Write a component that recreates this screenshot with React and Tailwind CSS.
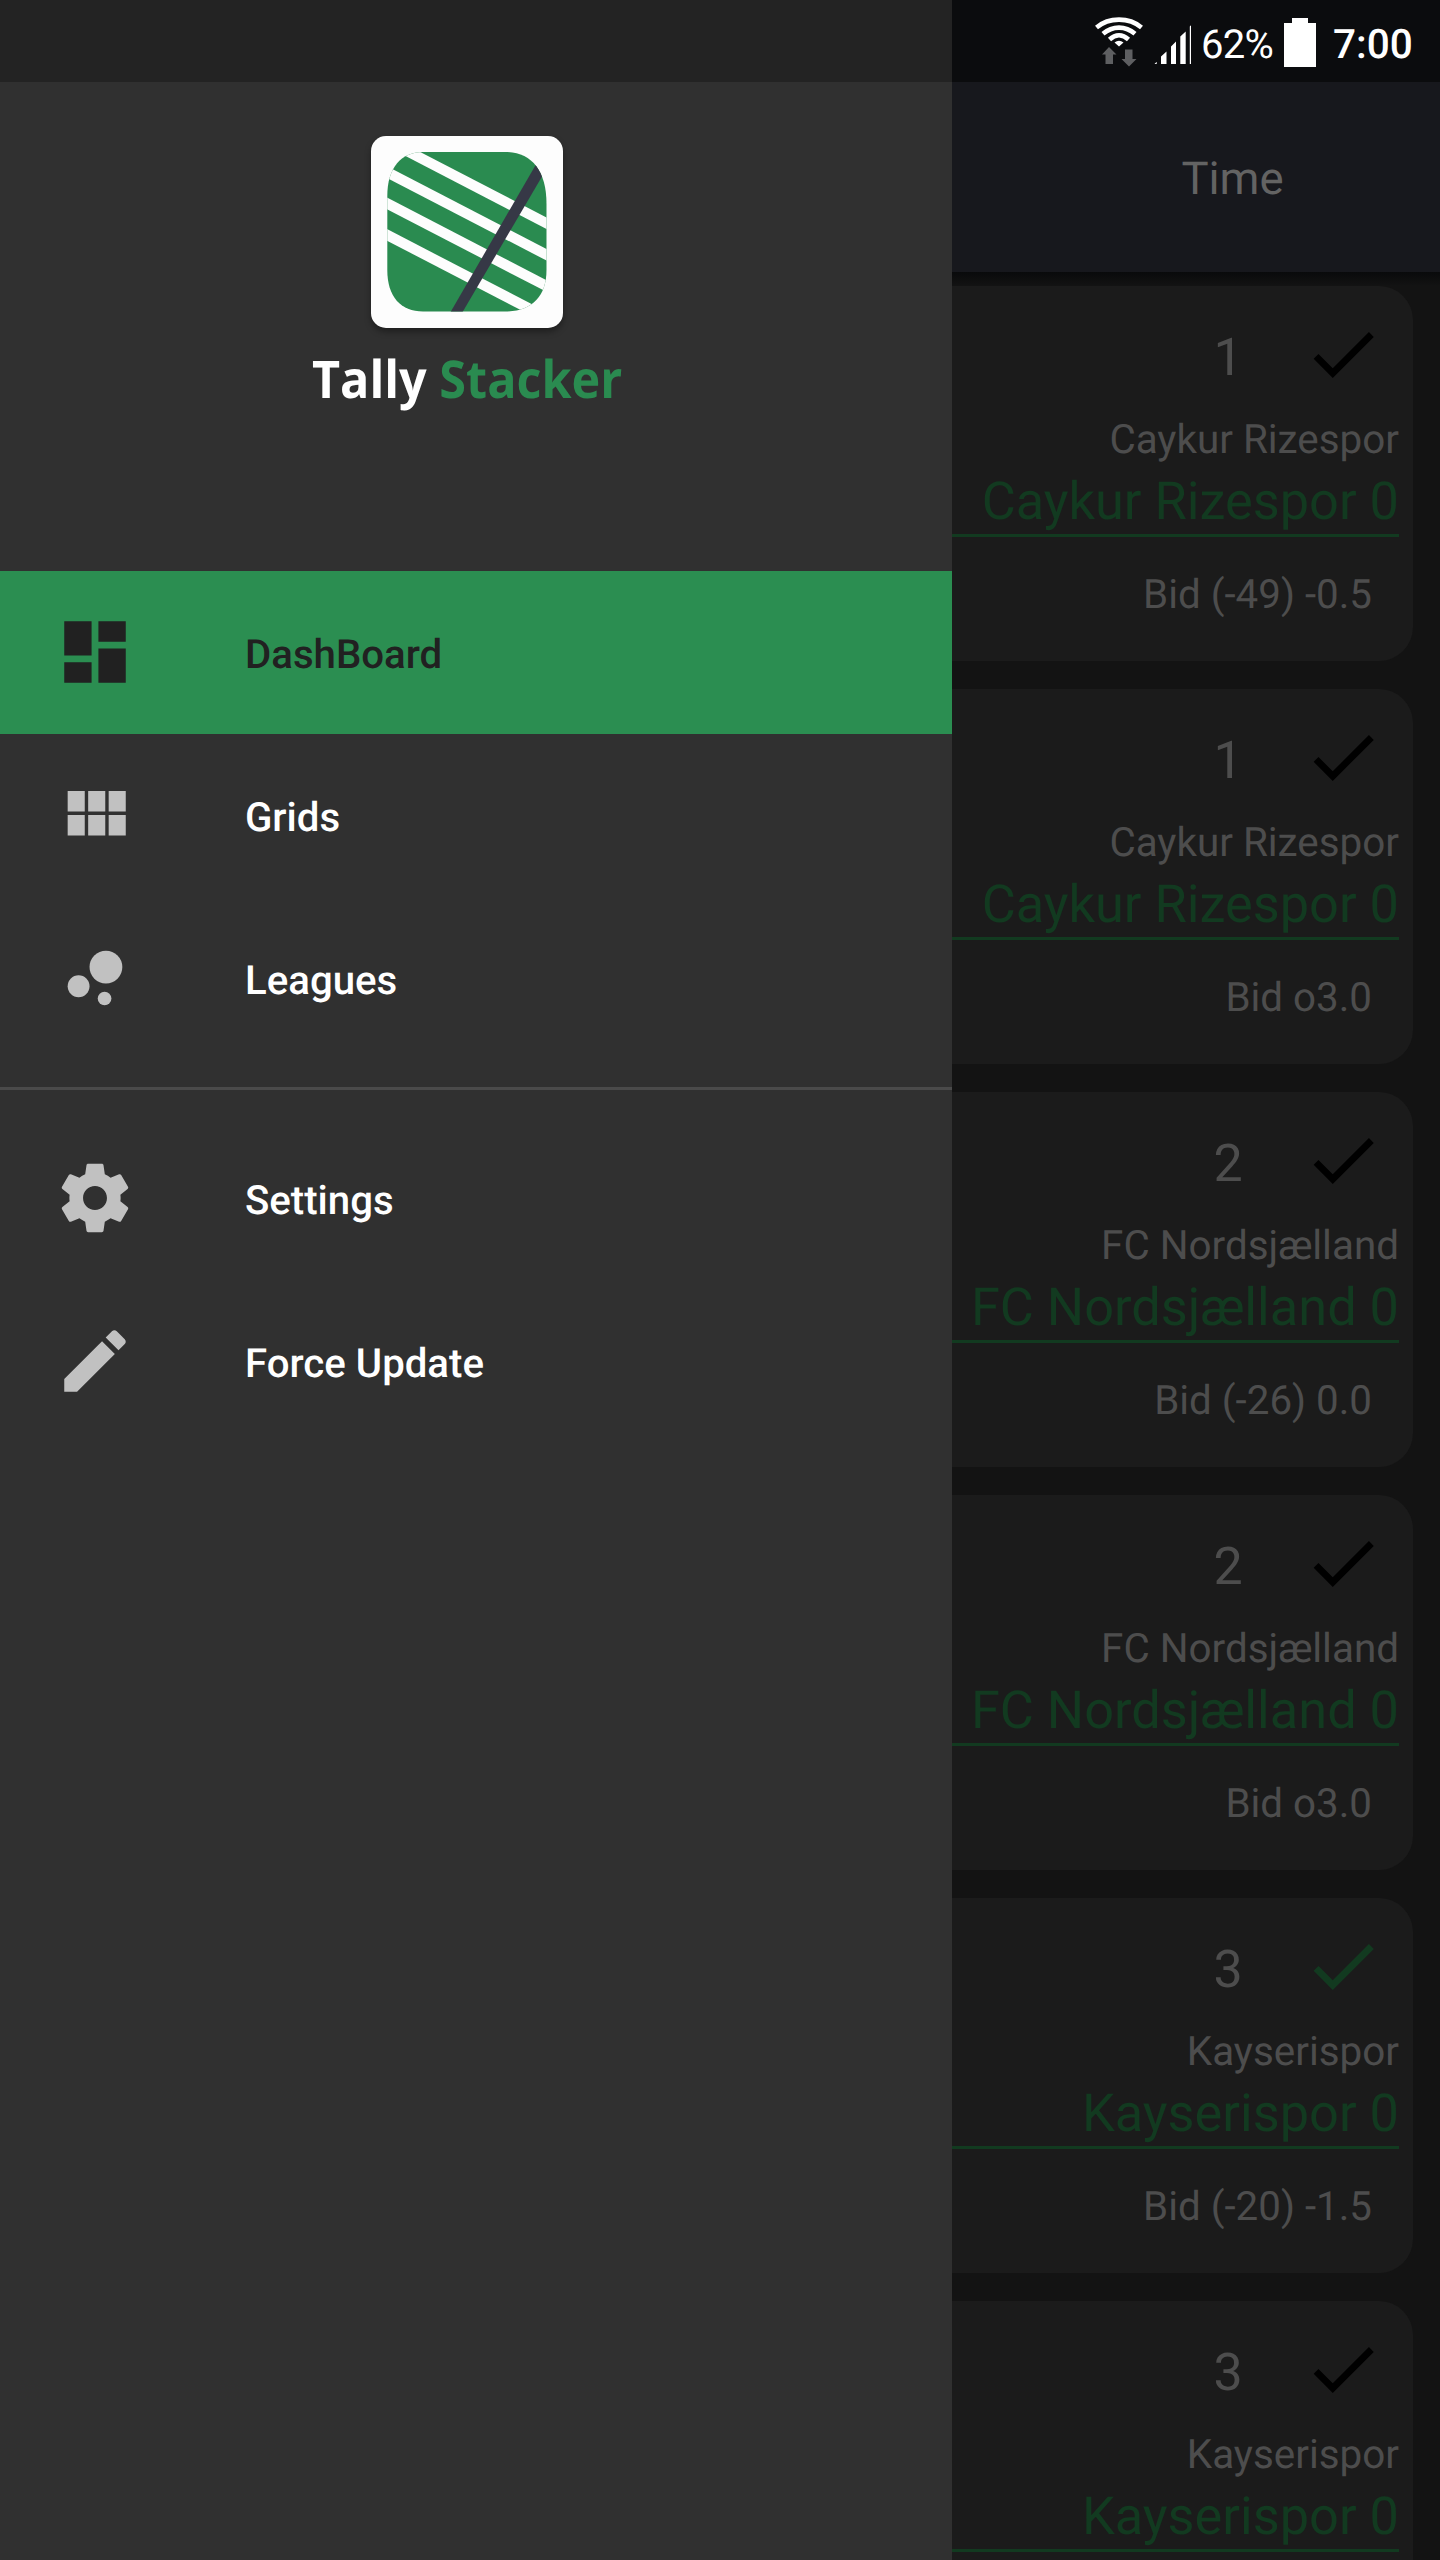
import React from "react";

const menuIcons = {
  dashboard: "M3 13h8V3H3v10zm0 8h8v-6H3v6zm10 0h8V11h-8v10zm0-18v6h8V3h-8z",
  grids: "M4 11h5V5H4v6zm0 7h5v-6H4v6zm6 0h5v-6h-5v6zm6 0h5v-6h-5v6zm-6-7h5V5h-5v6zm6-6v6h5V5h-5z",
  settings:
    "M19.43 12.98c.04-.32.07-.64.07-.98s-.03-.66-.07-.98l2.11-1.65c.19-.15.24-.42.12-.64l-2-3.46c-.12-.22-.39-.3-.61-.22l-2.49 1c-.52-.4-1.08-.73-1.69-.98l-.38-2.65C14.46 2.18 14.25 2 14 2h-4c-.25 0-.46.18-.49.42l-.38 2.65c-.61.25-1.17.59-1.69.98l-2.49-1c-.23-.09-.49 0-.61.22l-2 3.46c-.13.22-.07.49.12.64l2.11 1.65c-.04.32-.07.65-.07.98s.03.66.07.98l-2.11 1.65c-.19.15-.24.42-.12.64l2 3.46c.12.22.39.3.61.22l2.49-1c.52.4 1.08.73 1.69.98l.38 2.65c.03.24.24.42.49.42h4c.25 0 .46-.18.49-.42l.38-2.65c.61-.25 1.17-.59 1.69-.98l2.49 1c.23.09.49 0 .61-.22l2-3.46c.12-.22.07-.49-.12-.64l-2.11-1.65zM12 15.5c-1.93 0-3.5-1.57-3.5-3.5s1.57-3.5 3.5-3.5 3.5 1.57 3.5 3.5-1.57 3.5-3.5 3.5z",
  edit: "M3 17.25V21h3.75L17.81 9.94l-3.75-3.75L3 17.25zM20.71 7.04c.39-.39.39-1.02 0-1.41l-2.34-2.34c-.39-.39-1.02-.39-1.41 0l-1.83 1.83 3.75 3.75 1.83-1.83z",
};

function MenuItem({ icon, label, active }) {
  return (
    <a
      className={
        "flex h-[163px] items-center pl-[54px] " +
        (active ? "bg-[#2b8e51] text-[#212121]" : "text-white")
      }
    >
      <svg
        viewBox="0 0 24 24"
        className={"mb-[2px] h-[82px] w-[82px] fill-current " + (active ? "" : "text-[#c1c1c1]")}
      >
        {icon === "leagues" ? (
          <>
            <circle cx="7.2" cy="14.4" r="3.2" />
            <circle cx="14.8" cy="18" r="2" />
            <circle cx="15.2" cy="8.8" r="4.8" />
          </>
        ) : (
          <path d={menuIcons[icon]} />
        )}
      </svg>
      <span className="ml-[109px] pt-[5px] text-[40.200px] leading-[48px] font-medium">{label}</span>
    </a>
  );
}

function Logo() {
  return (
    <svg viewBox="0 0 192 192" className="h-[192px] w-[192px] rounded-[15px] bg-[#fdfdfd] shadow-[0_4px_6px_rgba(0,0,0,0.35)]">
      <defs>
        <clipPath id="tile">
          <path d="M52 16H134C160 16 175.500 34 175.500 68V134C175.500 161 160 175.500 134 175.500H52C30 175.500 16.300 161 16.300 134V60C16.300 32 30 16 52 16Z" />
        </clipPath>
      </defs>
      <g clipPath="url(#tile)">
        <rect width="192" height="192" fill="#2a8b50" />
        <g stroke="#fdfdfd" strokeWidth="10.300">
          <path d="M0 -3.700L192 95.800" />
          <path d="M0 27.800L192 127.300" />
          <path d="M0 59.100L192 158.600" />
          <path d="M0 90.600L192 190.100" />
        </g>
        <path d="M79 177L91 177L176 32L167 25Z" fill="#363846" />
      </g>
    </svg>
  );
}

function Drawer() {
  return (
    <aside className="flex h-full w-[952px] shrink-0 flex-col bg-[#303030]">
      <div className="h-[82px] shrink-0 bg-[#232323]" />
      <header className="flex h-[489px] shrink-0 flex-col items-center pr-[18px] pt-[54px]">
        <Logo />
        <h1 className="mt-[15px] origin-center scale-x-[0.934] whitespace-nowrap font-['Open_Sans',sans-serif] text-[52px] leading-[72px] font-bold text-white">
          Tally <span className="text-[#2a8b50]">Stacker</span>
        </h1>
      </header>
      <nav>
        <MenuItem icon="dashboard" label="DashBoard" active />
        <MenuItem icon="grids" label="Grids" />
        <MenuItem icon="leagues" label="Leagues" />
        <div className="mt-[27px] mb-[27px] h-[3px] bg-[#4a4a4a]" />
        <MenuItem icon="settings" label="Settings" />
        <MenuItem icon="edit" label="Force Update" />
      </nav>
    </aside>
  );
}

function StatusBar() {
  return (
    <div className="flex h-[82px] shrink-0 items-start bg-[#0b0c0e] pl-[142px] text-white">
      <svg viewBox="0 0 50 52" className="mt-[16px] h-[52px] w-[50px] shrink-0" fill="none">
        <g stroke="#fff" strokeWidth="4.600">
          <path d="M2.500 11.500C15 1 35 1 47.500 11.500" />
          <path d="M9 17.800C18.500 9.500 31.500 9.500 41 17.800" />
          <path d="M15.500 23.500C21.500 18 28.500 18 34.500 23.500" />
        </g>
        <path d="M20.500 26.500Q25 23 29.500 26.500L25 30.500Z" fill="#fff" />
        <path d="M15 31L22.500 38.500H19V48H11.500V38.500H8Z" fill="#5e5f61" />
        <path d="M35 50.500L27.500 43H31V33.500H38.500V43H42.500Z" fill="#5e5f61" />
      </svg>
      <svg viewBox="0 0 38 40" className="ml-[10px] mt-[25px] h-[40px] w-[38px] shrink-0" fill="#fff">
        <path d="M0.500 39L2.700 36.800V39ZM7 39V31.500L12.500 26.500V39ZM17 39V21.500L22 16.500V39ZM26.300 39V11.500L31.700 6.500V39ZM35.800 39V1.500L37 0.300V39Z" />
      </svg>
      <span className="ml-[9px] mt-[20px] w-[83px] text-[40px] tracking-[-0.7px] leading-[50px]">62%</span>
      <svg viewBox="0 0 32 49" className="mt-[18px] h-[49px] w-[32px] shrink-0" fill="#fff">
        <path d="M8 0H24V5H32V49H0V5H8Z" />
      </svg>
      <span className="ml-[17px] mt-[19px] text-[40.500px] leading-[50px] font-medium">7:00</span>
    </div>
  );
}

function BidCard({ round, team, bid, matched }) {
  return (
    <article className="h-[375px] w-[461px] shrink-0 rounded-r-[34px] bg-[#1b1b1b] pt-[28px] text-right text-[#4d4d4d]">
      <div className="flex h-[82px] justify-end pr-[29px]">
        <span className="w-[30px] text-center text-[52px] leading-[88px]">{round}</span>
        <svg
          viewBox="0 0 24 24"
          className={"-mt-px ml-[59px] h-[82px] w-[82px] fill-current " + (matched ? "text-[#123a20]" : "text-black")}
        >
          <path d="M9 16.170L4.830 12l-1.420 1.410L9 19 21 7l-1.410-1.410z" />
        </svg>
      </div>
      <p className="mt-[20px] mr-[14px] text-[40.400px] leading-[48px]">{team}</p>
      <p className="mr-[14px] border-b-[3px] border-[#123a20] pt-[5px] text-[52.300px] leading-[65px] text-[#123a20]">
        {team} 0
      </p>
      {bid && <p className="mt-[34px] mr-[41px] text-[40.300px] leading-[48px]">{bid}</p>}
    </article>
  );
}

const bids = [
  { round: 1, team: "Caykur Rizespor", bid: "Bid (-49) -0.5" },
  { round: 1, team: "Caykur Rizespor", bid: "Bid o3.0" },
  { round: 2, team: "FC Nordsjælland", bid: "Bid (-26) 0.0" },
  { round: 2, team: "FC Nordsjælland", bid: "Bid o3.0" },
  { round: 3, team: "Kayserispor", bid: "Bid (-20) -1.5", matched: true },
  { round: 3, team: "Kayserispor" },
];

export default function App() {
  return (
    <div className="flex h-[2560px] w-[1440px] overflow-hidden bg-[#131313] font-['Roboto',sans-serif] [text-rendering:geometricPrecision]">
      <Drawer />
      <main className="flex h-full w-[488px] flex-col">
        <StatusBar />
        <div className="flex h-[190px] shrink-0 items-center justify-center bg-[#17181d] pl-[73px] text-[45.500px] text-[#636363]">
          <span className="mt-[6px] leading-[56px]">Time</span>
        </div>
        <div className="h-[14px] shrink-0 bg-linear-to-b from-[#090a0b] to-[#131313]" />
        <section className="flex flex-col gap-[28px]">
          {bids.map((b, i) => (
            <BidCard key={i} {...b} />
          ))}
        </section>
      </main>
    </div>
  );
}
